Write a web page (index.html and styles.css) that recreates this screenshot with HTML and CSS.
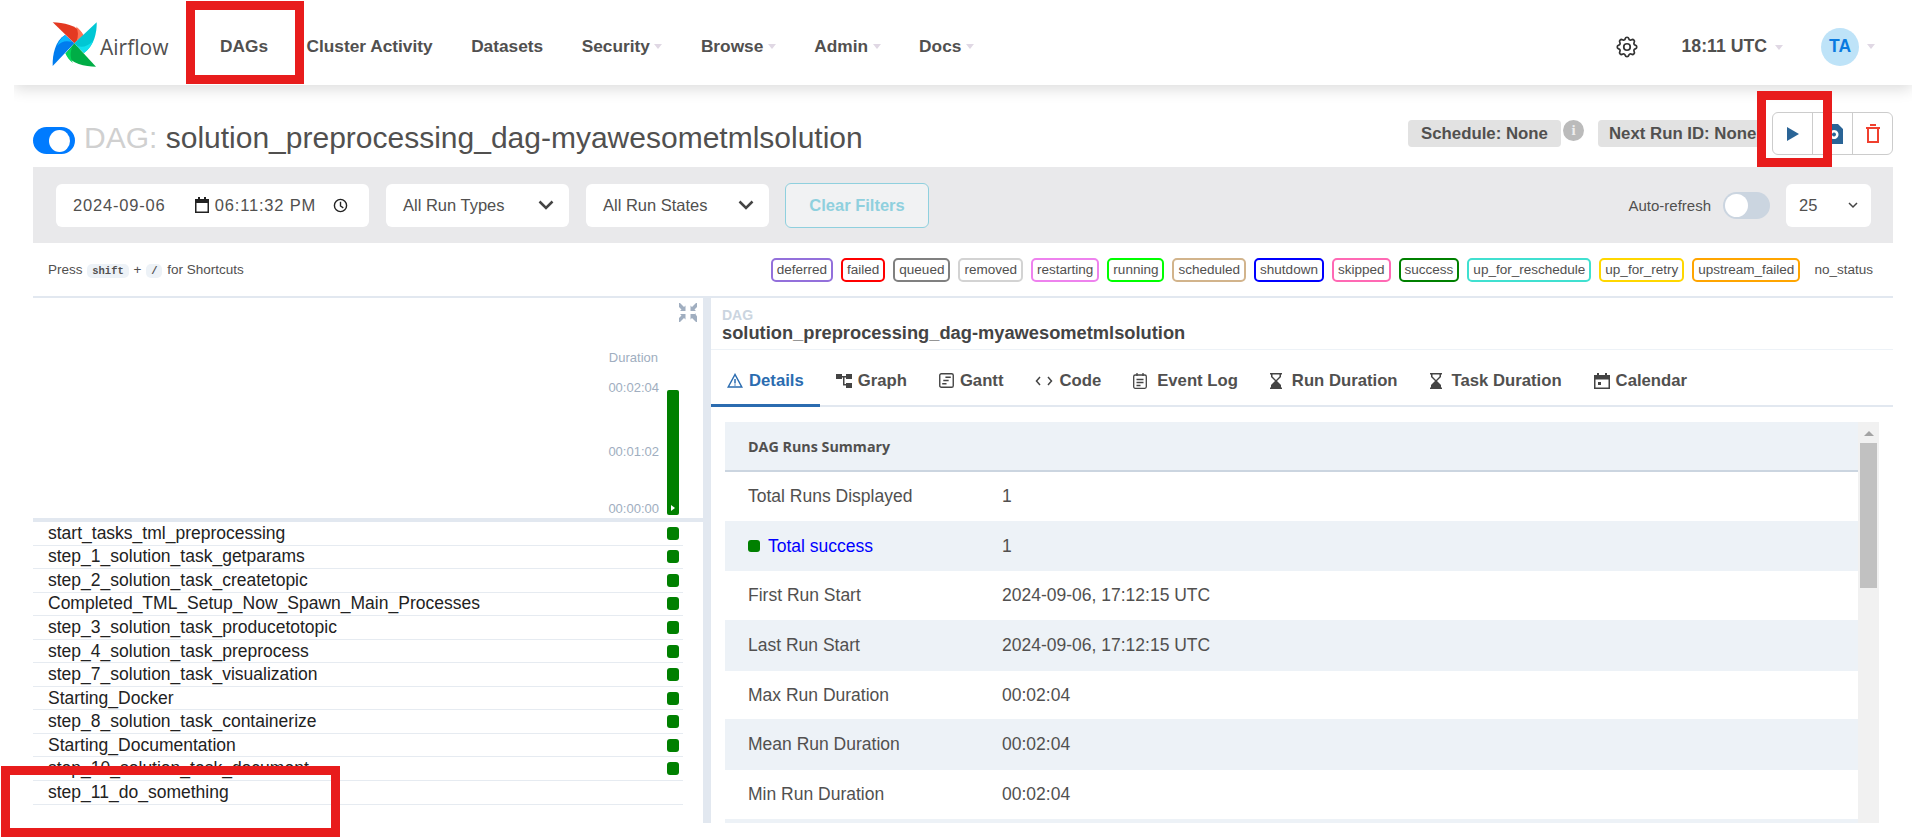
FILE: index.html
```html
<!DOCTYPE html>
<html lang="en">
<head>
    <meta charset="UTF-8">
    <meta name="viewport" content="width=device-width, initial-scale=1.0">
    <title>Airflow - solution_preprocessing_dag-myawesometmlsolution</title>
    <link rel="stylesheet" href="styles.css">
</head>
<body>
    <nav class="navbar">
        <div class="brand">
            <svg class="logo" viewBox="0 0 45 45" width="45" height="45">
                <path fill="#e43921" d="M.7.3C11 .5 25 3 31.3 13L22.3 21.3z"/>
                <path fill="#ff7557" d="M24 4.5C27 6.500 29.500 9.500 31.300 13L24.500 19.500C26.500 14 26.500 9 24 4.500z"/>
                <path fill="#00c7d4" d="M44.700.3C45 11 42 24 32 31L22.300 21.300z"/>
                <path fill="#11e1ee" d="M41 19C39 24 36 28 32 31L25 24C31 26 36 24 41 19z"/>
                <path fill="#00ad46" d="M44 44.700C33 44.500 19 42 13.500 31.500L22.300 21.300z"/>
                <path fill="#04d659" d="M21 41C17 38 15 35 13.500 31.500L20.500 24.500C18 30 18 36 21 41z"/>
                <path fill="#017cee" d="M.7 44C.3 33 3 19 13 13L22.300 21.300z"/>
                <path fill="#0cb6ff" d="M5 24C7 19 10 15.500 13 13L20 20C14 18 9 19.500 5 24z"/>
            </svg>
            <span class="brand-name">Airflow</span>
        </div>
        <ul class="nav-links">
            <li>DAGs</li>
            <li>Cluster Activity</li>
            <li>Datasets</li>
            <li class="has-caret">Security</li>
            <li class="has-caret">Browse</li>
            <li class="has-caret">Admin</li>
            <li class="has-caret">Docs</li>
        </ul>
        <div class="nav-right">
            <svg class="gear" viewBox="0 0 24 24" width="26" height="26" fill="none" stroke="#333" stroke-width="1.600">
                <path d="M10.325 4.317c.426-1.756 2.924-1.756 3.35 0a1.724 1.724 0 0 0 2.573 1.066c1.543-.94 3.31.826 2.37 2.37a1.724 1.724 0 0 0 1.065 2.572c1.756.426 1.756 2.924 0 3.35a1.724 1.724 0 0 0-1.066 2.573c.94 1.543-.826 3.31-2.37 2.37a1.724 1.724 0 0 0-2.572 1.065c-.426 1.756-2.924 1.756-3.35 0a1.724 1.724 0 0 0-2.573-1.066c-1.543.94-3.31-.826-2.37-2.37a1.724 1.724 0 0 0-1.065-2.572c-1.756-.426-1.756-2.924 0-3.35a1.724 1.724 0 0 0 1.066-2.573c-.94-1.543.826-3.31 2.37-2.37c1 .608 2.296.07 2.572-1.065z"/>
                <circle cx="12" cy="12" r="3"/>
            </svg>
            <span class="clock has-caret">18:11 UTC</span>
            <span class="avatar-wrap has-caret"><span class="avatar">TA</span></span>
        </div>
    </nav>

    <main class="page">
        <header class="dag-header">
            <div class="dag-switch"></div>
            <h1 class="dag-title"><span class="dag-prefix">DAG:</span> solution_preprocessing_dag-myawesometmlsolution</h1>
            <div class="dag-meta">
                <span class="meta-badge">Schedule: None</span>
                <span class="info-dot">i</span>
                <span class="meta-badge next-run">Next Run ID: None</span>
                <div class="btn-group">
                    <button class="icon-btn">
                        <svg viewBox="0 0 12 14" width="12" height="14"><path fill="#2a6496" d="M0 0l12 7-12 7z"/></svg>
                    </button>
                    <button class="icon-btn">
                        <svg viewBox="0 0 24 24" width="24" height="24"><path fill="#2a6496" fill-rule="evenodd" d="M4 2h13l5 5v15H4zM13 8a4.500 4.500 0 1 0 .01 0zM13 10.500a2 2 0 1 1-.01 0z"/></svg>
                    </button>
                    <button class="icon-btn">
                        <svg viewBox="0 0 16 19" width="16" height="19" fill="none" stroke="#f0402f" stroke-width="2"><path d="M1 4h14M5 1h6M3 4v14h10V4"/></svg>
                    </button>
                </div>
            </div>
        </header>

        <section class="filters">
            <div class="field date-field">
                <span class="date-val">2024-09-06</span>
                <svg class="cal-icon" viewBox="0 0 14 16" width="14" height="16"><path fill="#222" fill-rule="evenodd" d="M3 0h2v2h4V0h2v2h3v14H0V2h3zM1.500 6v8.500h11V6z"/></svg>
                <span class="date-val">06:11:32 PM</span>
                <svg class="clock-icon" viewBox="0 0 16 16" width="15" height="15" fill="none" stroke="#222" stroke-width="1.500"><circle cx="8" cy="8" r="6.500"/><path d="M8 4v4.500l3 2"/></svg>
            </div>
            <div class="field select-field types">All Run Types
                <svg class="chev" viewBox="0 0 16 10" width="16" height="10" fill="none" stroke="#444" stroke-width="2.500"><path d="M1.500 1.500L8 8l6.500-6.500"/></svg>
            </div>
            <div class="field select-field states">All Run States
                <svg class="chev" viewBox="0 0 16 10" width="16" height="10" fill="none" stroke="#444" stroke-width="2.500"><path d="M1.500 1.500L8 8l6.500-6.500"/></svg>
            </div>
            <button class="clear-btn">Clear Filters</button>
            <div class="refresh">
                <span class="refresh-label">Auto-refresh</span>
                <span class="refresh-switch"></span>
                <div class="field per-page">25
                    <svg class="chev" viewBox="0 0 10 7" width="10" height="7" fill="none" stroke="#444" stroke-width="1.500"><path d="M1 1l4 4 4-4"/></svg>
                </div>
            </div>
        </section>

        <section class="legend-row">
            <div class="shortcuts">Press <kbd>shift</kbd> + <kbd>/</kbd> for Shortcuts</div>
            <div class="legend">
                <span class="state s-deferred">deferred</span>
                <span class="state s-failed">failed</span>
                <span class="state s-queued">queued</span>
                <span class="state s-removed">removed</span>
                <span class="state s-restarting">restarting</span>
                <span class="state s-running">running</span>
                <span class="state s-scheduled">scheduled</span>
                <span class="state s-shutdown">shutdown</span>
                <span class="state s-skipped">skipped</span>
                <span class="state s-success">success</span>
                <span class="state s-reschedule">up_for_reschedule</span>
                <span class="state s-retry">up_for_retry</span>
                <span class="state s-upstream">upstream_failed</span>
                <span class="state s-none">no_status</span>
            </div>
        </section>

        <section class="split">
            <div class="grid-panel">
                <div class="chart">
                    <svg class="collapse" viewBox="0 0 18 19" width="18" height="19" fill="#a0aec0">
                        <path d="M1 0l4 4 1.500-1.500V8H1l1.500-1.500-2.500-2.500V0zM17 0l-4 4-1.500-1.500V8H17l-1.500-1.500 2.500-2.500V0zM1 19l4-4 1.500 1.500V11H1l1.500 1.500-2.500 2.500V19zM17 19l-4-4-1.500 1.500V11H17l-1.500-1.500 2.500 4V19z"/>
                    </svg>
                    <div class="axis">
                        <div class="axis-title">Duration</div>
                        <div class="ticks">
                            <div class="tick">00:02:04</div>
                            <div class="tick">00:01:02</div>
                            <div class="tick">00:00:00</div>
                        </div>
                        <div class="run-bar"><span class="run-flag"></span></div>
                    </div>
                </div>
                <div class="task-list">
                    <div class="task">start_tasks_tml_preprocessing<span class="dot"></span></div>
                    <div class="task">step_1_solution_task_getparams<span class="dot"></span></div>
                    <div class="task">step_2_solution_task_createtopic<span class="dot"></span></div>
                    <div class="task">Completed_TML_Setup_Now_Spawn_Main_Processes<span class="dot"></span></div>
                    <div class="task">step_3_solution_task_producetotopic<span class="dot"></span></div>
                    <div class="task">step_4_solution_task_preprocess<span class="dot"></span></div>
                    <div class="task">step_7_solution_task_visualization<span class="dot"></span></div>
                    <div class="task">Starting_Docker<span class="dot"></span></div>
                    <div class="task">step_8_solution_task_containerize<span class="dot"></span></div>
                    <div class="task">Starting_Documentation<span class="dot"></span></div>
                    <div class="task">step_10_solution_task_document<span class="dot"></span></div>
                    <div class="task">step_11_do_something</div>
                </div>
            </div>

            <div class="detail-panel">
                <div class="detail-head">
                    <div class="detail-label">DAG</div>
                    <div class="detail-name">solution_preprocessing_dag-myawesometmlsolution</div>
                </div>
                <div class="tabs">
                    <div class="tab active">
                        <svg viewBox="0 0 16 15" width="16" height="15" fill="none" stroke="#2b6cb0" stroke-width="1.500"><path d="M8 1.500L1.200 14h13.600zM8 6v4.500M8 11.500v1"/></svg>Details
                    </div>
                    <div class="tab">
                        <svg viewBox="0 0 16 14" width="16" height="14" fill="#444"><path d="M0 0h6v5H0zM10 0h6v5h-6zM10 9h6v5h-6zM6 2h4v1.500H8.500V10H10v1.500H7V3.500H6z"/></svg>Graph
                    </div>
                    <div class="tab">
                        <svg viewBox="0 0 14 14" width="15" height="15" fill="none" stroke="#444" stroke-width="1.300"><rect x=".7" y=".7" width="12.600" height="12.600" rx="1.500"/><path d="M6 4h5M4 7h5M3 10h4"/></svg>Gantt
                    </div>
                    <div class="tab">
                        <svg viewBox="0 0 18 12" width="18" height="12" fill="none" stroke="#444" stroke-width="1.500"><path d="M5 2L1.500 6 5 10M13 2l3.500 4L13 10"/></svg>Code
                    </div>
                    <div class="tab tab-wide">
                        <svg viewBox="0 0 14 16" width="14" height="16" fill="none" stroke="#444" stroke-width="1.300"><rect x=".7" y="2" width="12.600" height="13.300" rx="1.500"/><path d="M4 0v3M10 0v3M3.500 6.500h7M3.500 9.500h7M3.500 12.500h4"/></svg>Event Log
                    </div>
                    <div class="tab tab-wide">
                        <svg viewBox="0 0 12 16" width="12" height="16" fill="#444"><path d="M0 0h12v1.500h-1v2.500L7 8l4 4v2.500h1V16H0v-1.500h1V12l4-4-4-4V1.500H0zM2.500 1.500V3.500L6 7l3.500-3.500v-2z"/></svg>Run Duration
                    </div>
                    <div class="tab tab-wide">
                        <svg viewBox="0 0 12 16" width="12" height="16" fill="#444"><path d="M0 0h12v1.500h-1v2.500L7 8l4 4v2.500h1V16H0v-1.500h1V12l4-4-4-4V1.500H0zM2.500 1.500V3.500L6 7l3.500-3.500v-2z"/></svg>Task Duration
                    </div>
                    <div class="tab">
                        <svg viewBox="0 0 16 16" width="16" height="16" fill="#444"><path fill-rule="evenodd" d="M3 0h2v2h6V0h2v2h3v14H0V2h3zM1.500 6.500v8h13v-8zM4 9h3v3H4z"/></svg>Calendar
                    </div>
                </div>
                <div class="summary-wrap">
                    <div class="summary">
                        <div class="summary-head">DAG Runs Summary</div>
                        <div class="summary-row"><span>Total Runs Displayed</span><span>1</span></div>
                        <div class="summary-row"><span class="total-success"><i class="dot-inline"></i>Total success</span><span>1</span></div>
                        <div class="summary-row"><span>First Run Start</span><span>2024-09-06, 17:12:15 UTC</span></div>
                        <div class="summary-row"><span>Last Run Start</span><span>2024-09-06, 17:12:15 UTC</span></div>
                        <div class="summary-row"><span>Max Run Duration</span><span>00:02:04</span></div>
                        <div class="summary-row"><span>Mean Run Duration</span><span>00:02:04</span></div>
                        <div class="summary-row"><span>Min Run Duration</span><span>00:02:04</span></div>
                        <div class="summary-row"></div>
                    </div>
                    <div class="scrollbar">
                        <span class="scroll-arrow"></span>
                        <span class="scroll-thumb"></span>
                    </div>
                </div>
            </div>
        </section>
    </main>

    <!-- annotation boxes drawn on top of the screenshot -->
    <div class="mark mark-dags"></div>
    <div class="mark mark-play"></div>
    <div class="mark mark-task"></div>
</body>
</html>
```

FILE: styles.css
```css
* {
    box-sizing: border-box;
}
html, body {
    margin: 0;
    height: 838px;
    overflow: hidden;
    background: #fff;
}
body {
    position: relative;
    font-family: "Liberation Sans", Arial, sans-serif;
    font-size: 16px;
    color: #51504f;
}

/* navbar */
.navbar {
    display: flex;
    align-items: center;
    height: 85px;
    margin-left: 14px;
    width: 1898px;
    padding-left: 38px;
    background: #fff;
    box-shadow: 0 4px 14px rgba(0, 0, 0, 0.14);
    clip-path: inset(0 0 -30px 0);
}
.brand {
    display: flex;
    align-items: center;
    gap: 3px;
    width: 168px;
    padding-top: 4px;
}
.brand-name {
    font-family: "Open Sans", sans-serif;
    font-size: 21px;
    margin-top: 4px;
}
.nav-links {
    display: flex;
    gap: 38.500px;
    list-style: none;
    margin: 0;
    padding: 7px 0 0;
    font-weight: bold;
    font-size: 17.300px;
    flex: 1;
}
.has-caret::after {
    content: "";
    display: inline-block;
    margin-left: 4.500px;
    vertical-align: middle;
    border-left: 4.500px solid transparent;
    border-right: 4.500px solid transparent;
    border-top: 5px solid #e0d8e4;
}
.nav-right {
    display: flex;
    align-items: center;
    padding: 8px 37px 0 0;
}
.gear {
    margin-right: 41px;
}
.clock {
    font-weight: bold;
    font-size: 17.700px;
    margin-right: 38px;
}
.clock::after {
    margin-left: 8px;
}
.avatar-wrap {
    display: flex;
    align-items: center;
}
.avatar-wrap::after {
    margin-left: 8px;
}
.avatar {
    display: flex;
    align-items: center;
    justify-content: center;
    width: 38px;
    height: 38px;
    border-radius: 50%;
    background: #bee3f8;
    color: #0a7be0;
    font-weight: bold;
    font-size: 17.500px;
}

.page {
    padding: 27px 21px 0 33px;
}

/* dag header */
.dag-header {
    display: flex;
    align-items: center;
    height: 43px;
}
.dag-switch {
    position: relative;
    flex: none;
    width: 42px;
    height: 27px;
    margin-top: 14px;
    border-radius: 14px;
    background: #007bff;
}
.dag-switch::after {
    content: "";
    position: absolute;
    right: 5px;
    top: 2.500px;
    width: 21px;
    height: 22px;
    border-radius: 50%;
    background: #fff;
}
.dag-title {
    margin: 0 0 0 9px;
    padding-top: 9px;
    font-size: 30px;
    font-weight: normal;
    white-space: nowrap;
}
.dag-prefix {
    color: #d0d0d0;
}
.dag-meta {
    display: flex;
    align-items: center;
    margin-left: auto;
}
.meta-badge {
    display: flex;
    align-items: center;
    justify-content: center;
    width: 153px;
    height: 27px;
    border-radius: 4px;
    background: #e2e2e2;
    font-weight: bold;
    font-size: 16.800px;
}
.next-run {
    justify-content: flex-start;
    width: 168px;
    margin-left: 14px;
    margin-right: 6px;
    padding-left: 11px;
    white-space: nowrap;
}
.info-dot {
    width: 21px;
    height: 21px;
    margin: -6px 0 0 2px;
    border-radius: 50%;
    background: #bbb;
    color: #eee;
    font: bold 15px/21px "Liberation Serif", serif;
    text-align: center;
}
.btn-group {
    display: flex;
    width: 121px;
    height: 43px;
    border: 1px solid #ccc;
    border-radius: 6px;
}
.icon-btn {
    display: flex;
    align-items: center;
    justify-content: center;
    flex: 1;
    padding: 0;
    border: 0;
    border-left: 1px solid #ccc;
    background: none;
}
.icon-btn:first-child {
    border-left: 0;
}

/* filters */
.filters {
    display: flex;
    align-items: center;
    height: 76px;
    margin-top: 12px;
    padding: 0 22px 0 23px;
    background: #e9e9eb;
}
.field {
    display: flex;
    align-items: center;
    height: 43px;
    border-radius: 6px;
    background: #fff;
    font-size: 16.500px;
}
.date-field {
    width: 313px;
    padding: 0 21px 0 17px;
}
.date-val {
    letter-spacing: 0.800px;
    white-space: nowrap;
}
.cal-icon {
    margin: 0 6px 0 auto;
}
.clock-icon {
    margin-left: 17px;
}
.select-field {
    justify-content: space-between;
    padding: 0 15px 0 17px;
    margin-left: 17px;
}
.types {
    width: 183px;
}
.states {
    width: 183px;
}
.clear-btn {
    width: 144px;
    height: 45px;
    margin-left: 16px;
    border: 1px solid #8fd0de;
    border-radius: 6px;
    background: #f1f2f3;
    color: #8fd0de;
    font: bold 16.500px "Liberation Sans", sans-serif;
}
.refresh {
    display: flex;
    align-items: center;
    margin-left: auto;
}
.refresh-label {
    font-size: 15px;
}
.refresh-switch {
    position: relative;
    width: 47px;
    height: 27px;
    margin: 0 16px 0 12px;
    border-radius: 14px;
    background: #cbd5e0;
}
.refresh-switch::after {
    content: "";
    position: absolute;
    left: 2px;
    top: 2px;
    width: 23px;
    height: 23px;
    border-radius: 50%;
    background: #fff;
}
.per-page {
    width: 85px;
    padding: 0 13px;
    justify-content: space-between;
}

/* legend */
.legend-row {
    display: flex;
    align-items: center;
    justify-content: space-between;
    height: 55px;
    padding: 0 14px 0 15px;
    border-bottom: 2px solid #e2e8f0;
}
.shortcuts {
    font-size: 13.500px;
}
kbd {
    display: inline-block;
    padding: 1px 5px;
    margin: 0 1px;
    border-radius: 5px;
    background: #edf2f7;
    font-family: "Liberation Mono", monospace;
    font-size: 10.500px;
    font-weight: bold;
}
.legend {
    display: flex;
    gap: 8px;
    font-size: 13.530px;
}
.state {
    display: flex;
    align-items: center;
    height: 24px;
    padding: 0 4px;
    border: 2px solid;
    border-radius: 5px;
    color: #51504f;
}
.s-deferred { border-color: #9370db; }
.s-failed { border-color: #ff0000; }
.s-queued { border-color: #808080; }
.s-removed { border-color: #d3d3d3; }
.s-restarting { border-color: #ee82ee; }
.s-running { border-color: #00ff00; }
.s-scheduled { border-color: #d2b48c; }
.s-shutdown { border-color: #0000ff; }
.s-skipped { border-color: #ff69b4; }
.s-success { border-color: #008000; }
.s-reschedule { border-color: #40e0d0; }
.s-retry { border-color: #ffd700; }
.s-upstream { border-color: #ffa500; }
.s-none { border-color: transparent; }

/* split panels */
.split {
    display: flex;
    height: 525px;
}
.grid-panel {
    width: 670px;
    flex: none;
}
.chart {
    display: flex;
    flex-direction: column;
    align-items: flex-end;
    height: 224px;
    padding: 5px 6px 0 0;
    border-bottom: 4px solid #e2e8f0;
}
.axis {
    position: relative;
    align-self: stretch;
    margin-top: 28px;
    padding-right: 38px;
    text-align: right;
    font-size: 13px;
    color: #a0aec0;
}
.axis-title {
    padding-right: 1px;
}
.ticks {
    display: flex;
    flex-direction: column;
    gap: 49px;
    margin-top: 15px;
}
.tick:last-child {
    margin-top: -7px;
}
.run-bar {
    position: absolute;
    right: 18px;
    top: 40px;
    width: 12px;
    height: 125px;
    border-radius: 2px;
    background: #008000;
}
.run-flag {
    position: absolute;
    left: 4px;
    bottom: 4px;
    border-left: 4px solid #fff;
    border-top: 3px solid transparent;
    border-bottom: 3px solid transparent;
}
.task-list {
    margin-right: 20px;
}
.task {
    display: flex;
    align-items: center;
    justify-content: space-between;
    height: 23.550px;
    padding: 0 4px 0 15px;
    border-bottom: 1.500px solid #e6ebf1;
    font-size: 17.500px;
    color: #222;
}
.dot {
    width: 12px;
    height: 13px;
    border-radius: 3px;
    background: #008000;
}

.detail-panel {
    flex: 1;
    min-width: 0;
    border-left: 8px solid #e2e8f0;
}
.detail-head {
    height: 52px;
    padding: 10px 0 0 11px;
    border-bottom: 1px solid #edf2f7;
}
.detail-label {
    color: #cbd5e0;
    font-weight: bold;
    font-size: 14px;
    line-height: 15px;
}
.detail-name {
    color: #444;
    font-weight: bold;
    font-size: 18.300px;
    line-height: 20px;
}
.tabs {
    display: flex;
    height: 57px;
    border-bottom: 2px solid #e2e8f0;
}
.tab {
    display: flex;
    align-items: center;
    gap: 6px;
    margin-bottom: -2px;
    padding: 7px 16px 0;
    border-bottom: 3px solid transparent;
    font-weight: bold;
    font-size: 16.700px;
    white-space: nowrap;
}
.tab-wide svg {
    margin-right: 4px;
}
.tab.active {
    border-bottom-color: #2b6cb0;
    color: #2b6cb0;
}
.summary-wrap {
    display: flex;
    width: 1154px;
    height: 401px;
    margin: 15px 0 0 14px;
    overflow: hidden;
    background: #f1f1f1;
}
.summary {
    width: 1133px;
    flex: none;
    background: #fff;
}
.summary-head {
    display: flex;
    align-items: center;
    height: 50px;
    padding-left: 23px;
    border-bottom: 2px solid #cbd5e0;
    background: #edf2f7;
    font: bold 14.300px "Open Sans", sans-serif;
}
.summary-row {
    display: grid;
    grid-template-columns: 254px 1fr;
    align-items: center;
    height: 48.700px;
    padding-left: 23px;
    font-size: 17.500px;
}
.summary-row:nth-child(odd) {
    height: 50.700px;
    background: #edf2f7;
}
.total-success {
    display: flex;
    align-items: center;
    color: #0000ff;
}
.dot-inline {
    width: 12px;
    height: 12px;
    margin-right: 8px;
    border-radius: 3px;
    background: #008000;
}
.scrollbar {
    display: flex;
    flex-direction: column;
    align-items: center;
    flex: 1;
    padding: 9px 2px 0;
}
.scroll-arrow {
    border-left: 5px solid transparent;
    border-right: 5px solid transparent;
    border-bottom: 5px solid #a3a3a3;
}
.scroll-thumb {
    width: 17px;
    height: 145px;
    margin-top: 7px;
    background: #c1c1c1;
}

/* red annotation boxes */
.mark {
    position: absolute;
    border: 9px solid #e81c1c;
}
.mark-dags {
    left: 186px;
    top: 1px;
    width: 118px;
    height: 83px;
}
.mark-play {
    left: 1757px;
    top: 91px;
    width: 75px;
    height: 76px;
}
.mark-task {
    left: 1px;
    top: 766px;
    width: 339px;
    height: 71px;
}
```
